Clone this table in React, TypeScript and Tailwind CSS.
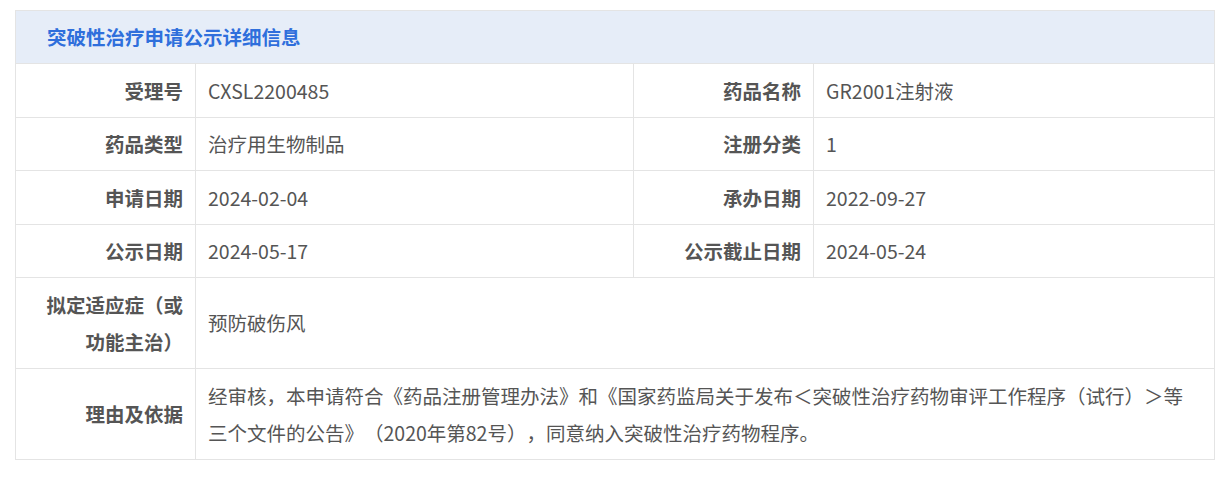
const rows: [string, string, string, string][] = [
  ["受理号", "CXSL2200485", "药品名称", "GR2001注射液"],
  ["药品类型", "治疗用生物制品", "注册分类", "1"],
  ["申请日期", "2024-02-04", "承办日期", "2022-09-27"],
  ["公示日期", "2024-05-17", "公示截止日期", "2024-05-24"],
]

const rowHeights = ["h-[54px]", "h-[53px]", "h-[54px]", "h-[53px]"]

export default function App() {
  return (
    <div
      className="min-h-screen bg-white pt-[10px] pl-[15px] text-[19.5px] text-[#555] [text-spacing-trim:space-all]"
      style={{ fontFamily: '"Noto Sans CJK SC", "Noto Sans", sans-serif' }}
    >
      <div className="w-[1200px] border border-[#e4e4e4]">
        {/* header */}
        <div className="h-[53px] flex items-center pl-[31px] bg-[#e6edf8] border-b border-[#e4e4e4]">
          <span className="font-bold text-[#2f6fdc]">突破性治疗申请公示详细信息</span>
        </div>

        <div className="grid grid-cols-[180px_438px_180px_1fr]">
          {rows.map(([l1, v1, l2, v2], i) => (
            <div key={l1} className="contents">
              <div className={`${rowHeights[i]} flex items-center justify-end pr-3 font-bold border-b border-r border-[#e4e4e4]`}>
                {l1}
              </div>
              <div className={`${rowHeights[i]} flex items-center pl-[12px] border-b border-r border-[#e4e4e4]`}>
                {v1}
              </div>
              <div className={`${rowHeights[i]} flex items-center justify-end pr-3 font-bold border-b border-r border-[#e4e4e4]`}>
                {l2}
              </div>
              <div className={`${rowHeights[i]} flex items-center pl-[12px] border-b border-[#e4e4e4]`}>
                {v2}
              </div>
            </div>
          ))}

          <div className="h-[91px] flex items-center justify-end pl-4 pr-3 text-right font-bold leading-[37px] border-b border-r border-[#e4e4e4]">
            拟定适应症（或功能主治）
          </div>
          <div className="col-span-3 h-[91px] flex items-center pl-[12px] border-b border-[#e4e4e4]">
            预防破伤风
          </div>

          <div className="h-[90px] flex items-center justify-end pr-3 font-bold border-r border-[#e4e4e4]">
            理由及依据
          </div>
          <div className="col-span-3 h-[90px] flex items-center pl-[12px] pr-3 leading-[37px]">
            <p>
              经审核，本申请符合《药品注册管理办法》和《国家药监局关于发布＜突破性治疗药物审评工作程序（试行）＞等
              <br />
              三个文件的公告》（2020年第82号），同意纳入突破性治疗药物程序。
            </p>
          </div>
        </div>
      </div>
    </div>
  )
}
